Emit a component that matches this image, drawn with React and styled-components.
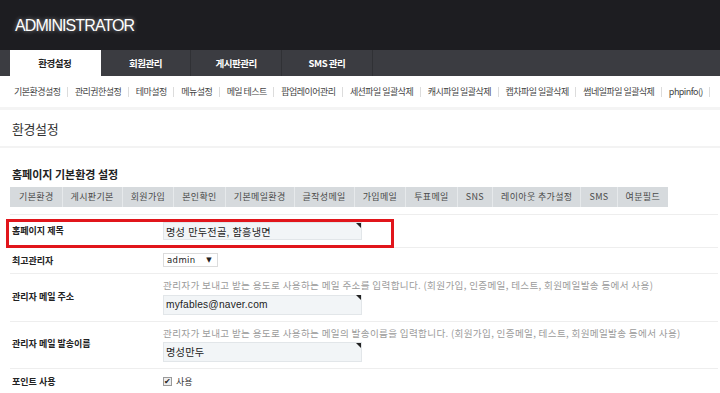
import React from "react";
import styled, { createGlobalStyle } from "styled-components";

const Global = createGlobalStyle`
  html, body { margin: 0; padding: 0; background: #fff; }
  body { font-family: "Liberation Sans", "Noto Sans CJK KR", sans-serif; color: #333; overflow: hidden; }
  * { box-sizing: border-box; }
`;

const KR = `"Noto Sans CJK KR", "Liberation Sans", sans-serif`;

const Header = styled.header`
  height: 50px;
  background: #1d1d21;
  display: flex;
  align-items: center;
  padding-left: 15px;
`;

const Logo = styled.h1`
  margin: 0;
  font-family: "Liberation Sans", sans-serif;
  font-weight: normal;
  font-size: 16px;
  letter-spacing: -0.9px;
  color: #fff;
  text-shadow: 0 0 4px rgba(255, 255, 255, 0.55);
  padding-top: 2px;
`;

const Nav = styled.nav`
  height: 26px;
  background: #3b3c41;
  display: flex;
  padding-left: 10px;
`;

const Tab = styled.div`
  width: 90.7px;
  display: flex;
  align-items: center;
  justify-content: center;
  font-family: ${KR};
  font-weight: bold;
  font-size: 9.5px;
  letter-spacing: -0.5px;
  color: ${(p) => (p.$active ? "#222" : "#fff")};
  background: ${(p) => (p.$active ? "#fff" : "transparent")};
  border-right: 1px solid ${(p) => (p.$active ? "#fff" : "#303135")};
`;

const SubNav = styled.ul`
  margin: 0;
  list-style: none;
  height: 34px;
  display: flex;
  align-items: center;
  padding: 0 0 0 7px;
  border-bottom: 3px solid #f4f4f4;
  white-space: nowrap;
`;

const SubItem = styled.li`
  position: relative;
  padding: 0 7.5px 0 7px;
  font-family: ${KR};
  font-size: 9px;
  letter-spacing: -0.55px;
  color: #444;
  &::after {
    content: "";
    position: absolute;
    right: 0;
    top: 50%;
    margin-top: -5px;
    height: 10px;
    width: 1px;
    background: #dcdcdc;
  }
`;

const PageTitle = styled.h2`
  margin: 0;
  height: 38px;
  padding-left: 12px;
  display: flex;
  align-items: center;
  font-family: ${KR};
  font-weight: normal;
  font-size: 13px;
  letter-spacing: -0.4px;
  color: #333;
  border-bottom: 2px solid #f3f3f3;
`;

const Content = styled.main`
  padding: 0 2px 0 10px;
`;

const SectionTitle = styled.h3`
  margin: 0;
  padding: 19px 0 0 2px;
  height: 38px;
  font-family: ${KR};
  font-weight: bold;
  font-size: 11px;
  color: #222;
  line-height: 14px;
`;

const TabBar = styled.div`
  display: inline-flex;
  height: 20px;
  background: #d6dadd;
  margin-bottom: 7px;
`;

const TabItem = styled.div`
  display: flex;
  align-items: center;
  padding: 0 8px;
  font-family: ${KR};
  font-size: 9px;
  letter-spacing: 0.35px;
  color: #4a4a4a;
  border-left: 1px solid ${(p) => (p.$first ? "transparent" : "#e6e9eb")};
`;

const Table = styled.div`
  border-top: 1px solid #eee;
`;

const Row = styled.div`
  position: relative;
  display: grid;
  grid-template-columns: 153px 1fr;
  align-items: center;
  border-bottom: 1px solid #eee;
  padding: ${(p) => p.$pad || "6px 0"};
`;

const Highlight = styled.div`
  position: absolute;
  left: -4px;
  width: 388px;
  top: 4px;
  bottom: -1px;
  border: 3px solid #e1151b;
  pointer-events: none;
`;

const Label = styled.div`
  padding-left: 2px;
  font-family: ${KR};
  font-weight: bold;
  font-size: 9px;
  color: #222;
`;

const Cell = styled.div`
  display: flex;
  flex-direction: column;
  align-items: flex-start;
`;

const Help = styled.div`
  font-family: ${KR};
  font-size: 9.6px;
  letter-spacing: 0.32px;
  color: #9b9b9b;
  line-height: 14px;
  margin-bottom: 2px;
  white-space: nowrap;
`;

const InputWrap = styled.span`
  position: relative;
  display: inline-block;
  &::after {
    content: "";
    position: absolute;
    right: 1px;
    top: 1px;
    border-style: solid;
    border-width: 0 5px 5px 0;
    border-color: transparent #222 transparent transparent;
  }
`;

const TextInput = styled.input`
  width: 199px;
  height: ${(p) => p.$h || 19}px;
  padding: 0 2px;
  margin: 0;
  background: #f2f5f7;
  border: 1px solid #e2e6e9;
  font-family: "Liberation Sans", "Noto Sans CJK KR", sans-serif;
  font-size: 10.2px;
  letter-spacing: 0.2px;
  color: #222;
  outline: none;
`;

const Select = styled.div`
  width: 55px;
  height: 14px;
  border: 1px solid #dcdcdc;
  display: flex;
  align-items: center;
  justify-content: space-between;
  padding: 0 5px 0 3px;
  font-family: "DejaVu Sans", sans-serif;
  font-size: 8.5px;
  letter-spacing: 0.4px;
  color: #222;
`;

const Arrow = styled.span`
  font-size: 7px;
`;

const CheckLabel = styled.label`
  display: flex;
  align-items: center;
  gap: 4px;
  font-family: ${KR};
  font-size: 9px;
  color: #333;
`;

const Box = styled.span`
  width: 9px;
  height: 9px;
  border: 1px solid #9a9a9a;
  background: #eee;
  display: flex;
  align-items: center;
  justify-content: center;
  font-size: 8px;
  line-height: 1;
  color: #222;
`;

const tabs = ["환경설정", "회원관리", "게시판관리", "SMS 관리"];
const subs = [
  "기본환경설정", "관리권한설정", "테마설정", "메뉴설정", "메일 테스트", "팝업레이어관리",
  "세션파일 일괄삭제", "캐시파일 일괄삭제", "캡차파일 일괄삭제", "썸네일파일 일괄삭제", "phpinfo()",
];
const sectTabs = [
  "기본환경", "게시판기본", "회원가입", "본인확인", "기본메일환경", "글작성메일",
  "가입메일", "투표메일", "SNS", "레이아웃 추가설정", "SMS", "여분필드",
];

export default function App() {
  return (
    <>
      <Global />
      <Header>
        <Logo>ADMINISTRATOR</Logo>
      </Header>
      <Nav>
        {tabs.map((t, i) => (
          <Tab key={t} $active={i === 0}>{t}</Tab>
        ))}
      </Nav>
      <SubNav>
        {subs.map((s) => (
          <SubItem key={s}>{s}</SubItem>
        ))}
      </SubNav>
      <PageTitle>환경설정</PageTitle>
      <Content>
        <SectionTitle>홈페이지 기본환경 설정</SectionTitle>
        <TabBar>
          {sectTabs.map((t, i) => (
            <TabItem key={t} $first={i === 0}>{t}</TabItem>
          ))}
        </TabBar>
        <Table>
          <Row $pad="7px 0 7px">
            <Highlight />
            <Label>홈페이지 제목</Label>
            <Cell>
              <InputWrap>
                <TextInput $h={18} readOnly defaultValue="명성 만두전골, 함흥냉면" />
              </InputWrap>
            </Cell>
          </Row>
          <Row $pad="5px 0 6px">
            <Label>최고관리자</Label>
            <Cell>
              <Select>admin<Arrow>▼</Arrow></Select>
            </Cell>
          </Row>
          <Row $pad="4px 0 6px">
            <Label>관리자 메일 주소</Label>
            <Cell>
              <Help>관리자가 보내고 받는 용도로 사용하는 메일 주소를 입력합니다. (회원가입, 인증메일, 테스트, 회원메일발송 등에서 사용)</Help>
              <InputWrap>
                <TextInput $h={20} readOnly defaultValue="myfables@naver.com" />
              </InputWrap>
            </Cell>
          </Row>
          <Row $pad="4px 0 6px">
            <Label>관리자 메일 발송이름</Label>
            <Cell>
              <Help>관리자가 보내고 받는 용도로 사용하는 메일의 발송이름을 입력합니다. (회원가입, 인증메일, 테스트, 회원메일발송 등에서 사용)</Help>
              <InputWrap>
                <TextInput $h={20} readOnly defaultValue="명성만두" />
              </InputWrap>
            </Cell>
          </Row>
          <Row $pad="6px 0 8px">
            <Label>포인트 사용</Label>
            <Cell>
              <CheckLabel>
                <Box>✔</Box>사용
              </CheckLabel>
            </Cell>
          </Row>
        </Table>
      </Content>
    </>
  );
}
